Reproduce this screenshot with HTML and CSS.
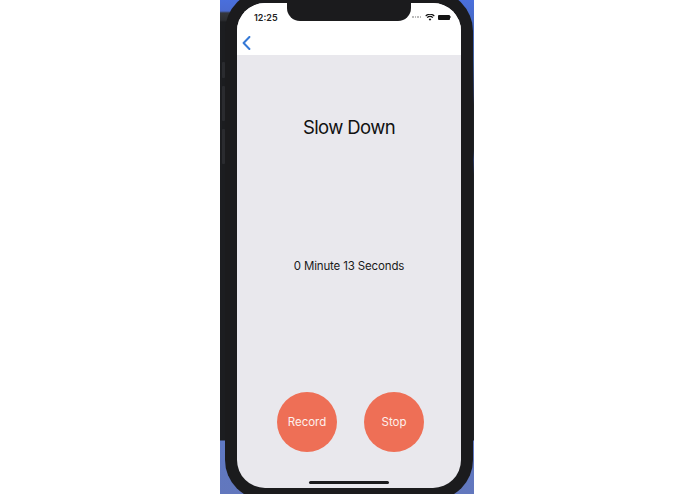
FILE: index.html
```html
<!DOCTYPE html>
<html lang="en">
<head>
<meta charset="utf-8">
<title>Slow Down</title>
<link rel="stylesheet" href="styles.css">
</head>
<body>
<div class="strip">
  <div class="side-keys">
    <span class="key key-mute"></span>
    <span class="key key-vol"></span>
    <span class="key key-vol"></span>
  </div>
  <div class="phone">
    <div class="screen">
      <div class="notch"></div>
      <header class="header">
        <div class="status">
          <span class="time">12:25</span>
          <div class="indicators">
            <span class="signal"><i></i><i></i><i></i><i></i></span>
            <svg class="wifi" viewBox="0 0 12 9" width="10" height="7"><path d="M6 8.6 4.3 6.7a2.5 2.5 0 0 1 3.4 0zM2.9 5.3 1.8 4.1a6 6 0 0 1 8.4 0L9.1 5.3a4.4 4.4 0 0 0-6.2 0zM.9 3.1 0 2a8.6 8.6 0 0 1 12 0l-.9 1.1a7.3 7.3 0 0 0-10.2 0z" fill="#111"/></svg>
            <span class="battery"></span>
            <span class="cap"></span>
          </div>
        </div>
        <svg class="back" viewBox="0 0 9 14" width="9" height="14"><path d="M7.4 1 1.6 7l5.8 6" fill="none" stroke="#3579d6" stroke-width="2" stroke-linecap="round" stroke-linejoin="round"/></svg>
      </header>
      <main class="body">
        <h1 class="title">Slow Down</h1>
        <p class="timer">0 Minute 13 Seconds</p>
        <div class="actions">
          <button class="round">Record</button>
          <button class="round">Stop</button>
        </div>
        <div class="home"></div>
      </main>
    </div>
  </div>
</div>
</body>
</html>
```

FILE: styles.css
```css
html, body {
  margin: 0;
  height: 494px;
  background: #fff;
  overflow: hidden;
  font-family: Inter, "Liberation Sans", sans-serif;
}
body {
  padding-left: 220px;
}
.strip {
  display: flex;
  width: 254px;
  height: 494px;
  overflow: hidden;
  background:
    linear-gradient(to bottom, #4a6fdc 0, #4a6ad0 11px, #34363c 13px, #2c2d31 20px, #1c1d20 22px, #1c1d20 440px, #5f79c4 441px, #6277bd 494px) left top / 10px 100% no-repeat,
    linear-gradient(to bottom, #4a6fdc 0, #41619f 60px, #2a3350 95px, #1e2126 105px, #1e2126 150px, #2a3a66 160px, #1e2126 175px, #1e2126 440px, #5f79c4 441px, #6277bd 494px);
}
.side-keys {
  flex: none;
  width: 5px;
  padding-top: 62px;
  box-sizing: border-box;
  display: flex;
  flex-direction: column;
  align-items: flex-end;
  gap: 8px;
}
.key {
  width: 3px;
  background: #2a2b2f;
  border-radius: 1px;
}
.key-mute {
  height: 16px;
}
.key-vol {
  height: 35px;
}
.phone {
  flex: none;
  width: 248px;
  height: 509px;
  margin-top: -9px;
  box-sizing: border-box;
  padding: 12px;
  background: #1b1b1d;
  border-radius: 40px;
}
.screen {
  position: relative;
  height: 100%;
  display: flex;
  flex-direction: column;
  background: #e9e8ed;
  border-radius: 28px;
  overflow: hidden;
}
.notch {
  position: absolute;
  top: 0;
  left: 50px;
  width: 124px;
  height: 18px;
  background: #1b1b1d;
  border-radius: 0 0 13px 13px;
}
.header {
  height: 52px;
  flex: none;
  background: #fff;
  box-sizing: border-box;
}
.status {
  display: flex;
  justify-content: space-between;
  align-items: center;
  padding: 7px 10px 0 17px;
  height: 14px;
}
.time {
  font-size: 9px;
  font-weight: 600;
  color: #222;
}
.indicators {
  display: flex;
  align-items: center;
  gap: 3px;
}
.signal {
  display: flex;
  gap: 1px;
  margin-right: 1px;
}
.signal i {
  width: 1.5px;
  height: 1.5px;
  background: #bbb;
}
.battery {
  width: 12px;
  height: 5px;
  background: #151515;
  border-radius: 1px;
}
.cap {
  width: 1px;
  height: 2px;
  margin-left: -3px;
  background: #888;
}
.back {
  display: block;
  margin: 12px 0 0 5px;
}
.body {
  flex: 1;
  display: flex;
  flex-direction: column;
  align-items: center;
}
.title {
  margin: 60px 0 0;
  font-size: 18.5px;
  line-height: 24px;
  font-weight: 400;
  letter-spacing: -0.6px;
  color: #111;
}
.timer {
  margin: 119px 0 0;
  font-size: 11.5px;
  line-height: 16px;
  letter-spacing: -0.15px;
  color: #1a1a1a;
}
.actions {
  display: flex;
  gap: 27px;
  margin: 118px 0 0 3px;
}
.round {
  width: 60px;
  height: 60px;
  padding: 0;
  border: 0;
  border-radius: 50%;
  background: #ee6f56;
  color: #fdf0ec;
  font: 400 11.5px Inter, "Liberation Sans", sans-serif;
}
.home {
  width: 80px;
  height: 2.5px;
  margin-top: 29px;
  background: #1b1b1d;
  border-radius: 2px;
}
```
